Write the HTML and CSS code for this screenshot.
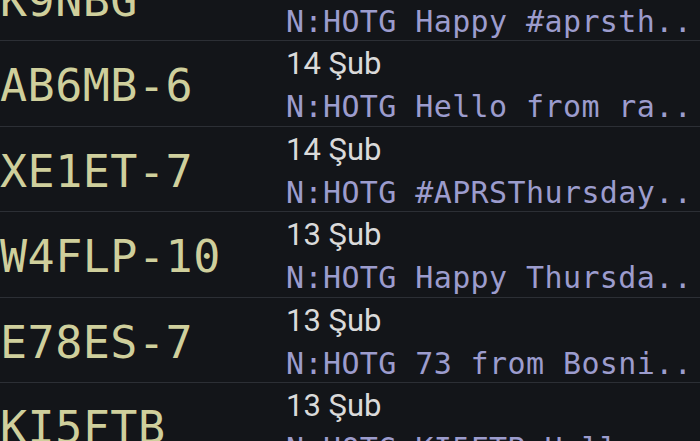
FILE: index.html
```html
<!DOCTYPE html>
<html>
<head>
<meta charset="utf-8">
<link rel="stylesheet" href="styles.css">
</head>
<body>
<div class="list">
  <div class="row">
    <div class="call">K9NBG</div>
    <div class="info"><div class="date">14 Şub</div><div class="msg">N:HOTG Happy #aprsth..</div></div>
  </div>
  <div class="row">
    <div class="call">AB6MB-6</div>
    <div class="info"><div class="date">14 Şub</div><div class="msg">N:HOTG Hello from ra..</div></div>
  </div>
  <div class="row">
    <div class="call">XE1ET-7</div>
    <div class="info"><div class="date">14 Şub</div><div class="msg">N:HOTG #APRSThursday..</div></div>
  </div>
  <div class="row">
    <div class="call">W4FLP-10</div>
    <div class="info"><div class="date">13 Şub</div><div class="msg">N:HOTG Happy Thursda..</div></div>
  </div>
  <div class="row">
    <div class="call">E78ES-7</div>
    <div class="info"><div class="date">13 Şub</div><div class="msg">N:HOTG 73 from Bosni..</div></div>
  </div>
  <div class="row">
    <div class="call">KI5FTB</div>
    <div class="info"><div class="date">13 Şub</div><div class="msg">N:HOTG KI5FTB Hello..</div></div>
  </div>
</div>
</body>
</html>
```
FILE: styles.css
```css
html, body {
  margin: 0;
  padding: 0;
  background: #131519;
  overflow: hidden;
  height: 100%;
}
.list {
  margin-top: -44.5px;
  display: flex;
  flex-direction: column;
}
.row {
  height: 84.5px;
  border-bottom: 1px solid #2c2f35;
  display: grid;
  grid-template-columns: 286px 1fr;
  align-items: start;
  overflow: hidden;
}
.call {
  font-family: "DejaVu Sans Mono", monospace;
  font-size: 45px;
  letter-spacing: 0.5px;
  line-height: 52px;
  color: #cfcf9c;
  padding-top: 19px;
  white-space: nowrap;
}
.info {
  display: flex;
  flex-direction: column;
  gap: 3px;
  padding-top: 2px;
}
.date {
  font-family: Roboto, "Noto Sans", sans-serif;
  font-size: 31px;
  line-height: 41px;
  color: #dadada;
  white-space: nowrap;
}
.msg {
  font-family: "DejaVu Sans Mono", monospace;
  font-size: 30px;
  letter-spacing: 0.4px;
  line-height: 40px;
  color: #9c9ccd;
  white-space: nowrap;
}
```
